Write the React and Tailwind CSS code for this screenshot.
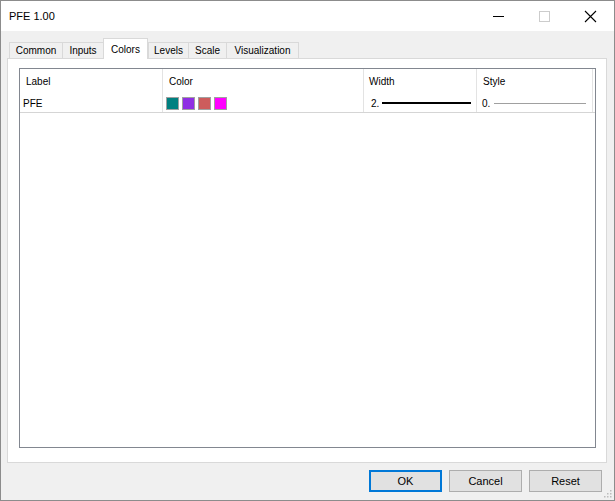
import React from "react";

const TABS = [
  { name: "Common", w: "w-[53px]" },
  { name: "Inputs", w: "w-[41px]" },
  { name: "Colors", w: "w-[45px]", active: true },
  { name: "Levels", w: "w-[40px]" },
  { name: "Scale", w: "w-[38px]" },
  { name: "Visualization", w: "w-[73px]" },
];

const SWATCHES = ["bg-[#008080]", "bg-[#8f2fe3]", "bg-[#cd5c5c]", "bg-[#ff00ff]"];

const Grip = () => (
  <svg width="10" height="10" viewBox="0 0 10 10" className="absolute bottom-[2px] right-[2px]">
    {[
      [8, 2],
      [5, 5],
      [8, 5],
      [2, 8],
      [5, 8],
      [8, 8],
    ].map(([x, y], i) => (
      <rect key={i} x={x} y={y} width="1.5" height="1.5" fill="#bcbcbc" />
    ))}
  </svg>
);

export default function App() {
  return (
    <div
      className="relative flex h-[501px] w-[615px] flex-col border border-[#8c8c8c] bg-[#f0f0f0] text-[10px] text-black"
      style={{ fontFamily: '"Liberation Sans", Arial, sans-serif' }}
    >
      {/* title bar */}
      <div className="flex h-[30px] items-center bg-white">
        <span className="ml-[8px] text-[11px]">PFE 1.00</span>
        <div className="ml-auto flex items-center">
          <svg width="46" height="30" viewBox="0 0 46 30">
            <line x1="17" y1="15.5" x2="28" y2="15.5" stroke="#000" strokeWidth="1" />
          </svg>
          <svg width="46" height="30" viewBox="0 0 46 30">
            <rect x="17.5" y="10.5" width="10" height="10" fill="none" stroke="#cccccc" strokeWidth="1" />
          </svg>
          <svg width="46" height="30" viewBox="0 0 46 30">
            <path d="M17 10 L28 21 M28 10 L17 21" stroke="#000" strokeWidth="1.1" />
          </svg>
        </div>
      </div>

      {/* tabs */}
      <div className="ml-[8px] mt-[7px] flex h-[20px] items-end">
        {TABS.map((t) => (
          <div
            key={t.name}
            className={
              t.active
                ? "z-10 -mb-px flex h-[21px] items-start justify-center border border-b-0 border-[#d9d9d9] bg-white pt-[3px] " + t.w
                : "flex h-[16px] items-center justify-center border border-b-0 border-r-0 border-[#d9d9d9] bg-[#f0f0f0] last:border-r " + t.w
            }
          >
            {t.name}
          </div>
        ))}
      </div>

      {/* panel */}
      <div className="ml-[6px] h-[405px] w-[600px] border border-[#d9d9d9] bg-white pl-[11px] pt-[9px]">
        <div className="h-[380px] w-[577px] border border-[#828790] bg-white">
          <div className="flex">
            <div className="flex w-[143px] flex-col border-r border-[#e3e3e3]">
              <div className="flex h-[25px] items-center pl-[6px]">Label</div>
              <div className="flex h-[18px] items-center pl-[3px]">PFE</div>
            </div>
            <div className="flex w-[201px] flex-col border-r border-[#e3e3e3]">
              <div className="flex h-[25px] items-center pl-[6px]">Color</div>
              <div className="flex h-[18px] items-center gap-[3px] pl-[3px]">
                {SWATCHES.map((c) => (
                  <span key={c} className={"h-[13px] w-[13px] border border-[#a0a0a0] " + c} />
                ))}
              </div>
            </div>
            <div className="flex w-[113px] flex-col border-r border-[#e3e3e3]">
              <div className="flex h-[25px] items-center pl-[5px]">Width</div>
              <div className="flex h-[18px] items-center pl-[7px]">
                <span>2.</span>
                <span className="ml-[3px] h-[2px] w-[89px] bg-black" />
              </div>
            </div>
            <div className="flex w-[116px] flex-col border-r border-[#e3e3e3]">
              <div className="flex h-[25px] items-center pl-[6px]">Style</div>
              <div className="flex h-[18px] items-center pl-[5px]">
                <span>0.</span>
                <span className="ml-[4px] h-px w-[92px] bg-[#a0a0a0]" />
              </div>
            </div>
          </div>
          <div className="h-px w-[575px] bg-[#d5d5d5]" />
        </div>
      </div>

      {/* buttons */}
      <div className="mr-[12px] mt-[7px] flex justify-end gap-[7px]">
        <button className="h-[22px] w-[73px] border-2 border-[#0078d7] bg-[#e1e1e1] text-[11px]">OK</button>
        <button className="h-[22px] w-[73px] border border-[#adadad] bg-[#e1e1e1] text-[11px]">Cancel</button>
        <button className="h-[22px] w-[73px] border border-[#adadad] bg-[#e1e1e1] text-[11px]">Reset</button>
      </div>
      <Grip />
    </div>
  );
}
